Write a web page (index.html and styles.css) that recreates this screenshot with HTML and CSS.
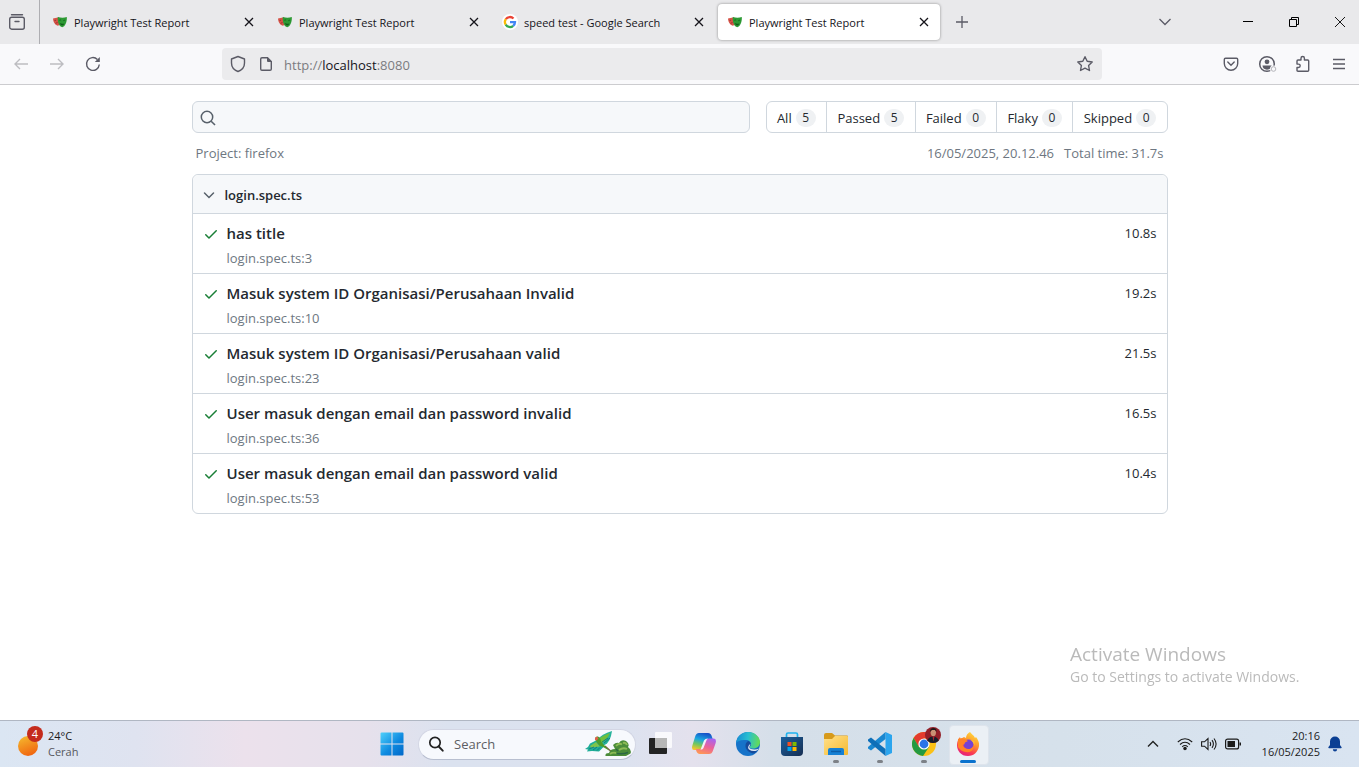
FILE: index.html
```html
<!DOCTYPE html>
<html lang="id">
<head>
<meta charset="utf-8">
<title>Playwright Test Report</title>
<link rel="stylesheet" href="styles.css">
</head>
<body>
<svg class="defs" aria-hidden="true">
  <symbol id="masks" viewBox="0 0 14 12">
    <path d="M0 2.600 6 1.200 7 8.500 5 9.800C2.600 9.600.2 6.800 0 2.600z" fill="#d65348"/>
    <path d="M1.500 4.600l1.600-.4M2.600 7.400 4.600 6.400" stroke="#8e2f28" stroke-width=".8"/>
    <path d="M4.800 1C8 1.900 11 1.900 13.800 1 14.200 5.500 12.300 10.500 9.200 11.200 6.200 10.800 4.300 6 4.800 1z" fill="#2d9a34"/>
    <path d="M6.300 4.300q1-1 1.800.2M10.300 4.700q1-1 1.900 0" fill="none" stroke="#125c1a" stroke-width=".8"/>
    <path d="M6.600 7.100q2.300 1.200 4.800.4-.8 2-2.500 1.900-1.700-.3-2.300-2.300z" fill="#125c1a"/>
  </symbol>
  <symbol id="close" viewBox="0 0 10 10"><path d="M1 1l8 8M9 1 1 9" stroke="#15141a" stroke-width="1.300" fill="none"/></symbol>
  <symbol id="check" viewBox="0 0 16 16"><path d="M13.780 4.220a.75.75 0 0 1 0 1.060l-7.250 7.250a.75.75 0 0 1-1.060 0L2.220 9.280a.75.75 0 0 1 1.060-1.060L6 10.940l6.720-6.720a.75.75 0 0 1 1.060 0z" fill="#1a7f37"/></symbol>
</svg>

<header class="browser">
  <div class="tabstrip">
    <button class="view-button" aria-label="Recent browsing"><svg width="18" height="18" viewBox="0 0 18 18" fill="none" stroke="#5b5b66" stroke-width="1.400"><path d="M3.500 1.700h11" stroke-linecap="round"/><rect x="1.700" y="4.200" width="14.600" height="12" rx="2"/><path d="M7 8.500h4" stroke-linecap="round"/></svg></button>
    <div class="tabs">
      <div class="tab"><svg class="favicon"><use href="#masks"/></svg><span class="tab-title">Playwright Test Report</span><button class="tab-close" aria-label="Close tab"><svg width="10" height="10"><use href="#close"/></svg></button></div>
      <div class="tab"><svg class="favicon"><use href="#masks"/></svg><span class="tab-title">Playwright Test Report</span><button class="tab-close" aria-label="Close tab"><svg width="10" height="10"><use href="#close"/></svg></button></div>
      <div class="tab"><svg class="favicon" viewBox="1 1 14 14"><circle cx="8" cy="8" r="8" fill="#fff"/><g fill="none" stroke-width="2.300"><path d="M3.800 5.200A5 5 0 0 1 11.500 4.500" stroke="#ea4335"/><path d="M3.800 5.200A5 5 0 0 0 3.700 10.700" stroke="#fbbc05"/><path d="M3.700 10.700A5 5 0 0 0 11.200 11.800" stroke="#34a853"/><path d="M8 8.100h5A5 5 0 0 1 11.200 11.800" stroke="#4285f4"/></g></svg><span class="tab-title">speed test - Google Search</span><button class="tab-close" aria-label="Close tab"><svg width="10" height="10"><use href="#close"/></svg></button></div>
      <div class="tab tab-active"><svg class="favicon"><use href="#masks"/></svg><span class="tab-title">Playwright Test Report</span><button class="tab-close" aria-label="Close tab"><svg width="10" height="10"><use href="#close"/></svg></button></div>
    </div>
    <button class="new-tab" aria-label="New tab"><svg width="12" height="12" viewBox="0 0 12 12"><path d="M6 0v12M0 6h12" stroke="#5b5b66" stroke-width="1.300"/></svg></button>
    <button class="all-tabs" aria-label="List all tabs"><svg width="14" height="8" viewBox="0 0 14 8"><path d="M1.500 1 7 6.500 12.500 1" fill="none" stroke="#5b5b66" stroke-width="1.300"/></svg></button>
    <div class="window-controls">
      <button aria-label="Minimize"><svg width="10" height="10" viewBox="0 0 10 10"><path d="M0 4.500h10" stroke="#000"/></svg></button>
      <button aria-label="Restore"><svg width="10" height="10" viewBox="0 0 10 10" fill="none" stroke="#000"><path d="M.5 2.500h7v7h-7zM2.500 2.500v-2h7v7h-2"/></svg></button>
      <button aria-label="Close"><svg width="10" height="10" viewBox="0 0 10 10"><path d="M0 0l10 10M10 0 0 10" stroke="#000" stroke-width=".9"/></svg></button>
    </div>
  </div>
  <div class="toolbar">
    <button aria-label="Back" disabled><svg width="16" height="16" viewBox="0 0 16 16"><path d="M15 8H2M7 3 2 8l5 5" fill="none" stroke="#bdbdc1" stroke-width="1.400"/></svg></button>
    <button aria-label="Forward" disabled><svg width="16" height="16" viewBox="0 0 16 16"><path d="M1 8h13M9 3l5 5-5 5" fill="none" stroke="#bdbdc1" stroke-width="1.400"/></svg></button>
    <button aria-label="Reload"><svg width="16" height="16" viewBox="0 0 16 16"><path d="M14.300 8.500A6.400 6.400 0 1 1 12.400 3.400" fill="none" stroke="#5b5b66" stroke-width="1.400"/><path d="M14.800 1v5h-5z" fill="#5b5b66"/></svg></button>
    <div class="spring"></div>
    <div class="urlbar">
      <svg width="16" height="18" viewBox="0 0 16 18" fill="none" stroke="#5b5b66" stroke-width="1.400"><path d="M8 1.500 14.500 4v4c0 4-2.500 7-6.500 8.500C4 15 1.500 12 1.500 8V4z" stroke-linejoin="round"/></svg>
      <svg class="page-icon" width="14" height="16" viewBox="0 0 14 16"><path d="M3 1.700h5.500L12.300 5.500V13q0 1.300-1.300 1.300H3Q1.700 14.300 1.700 13V3Q1.700 1.700 3 1.700z" fill="none" stroke="#5b5b66" stroke-width="1.400"/><path d="M8 1l5 5H9Q8 6 8 5z" fill="#5b5b66"/></svg>
      <span class="url">http://<b>localhost</b>:8080</span>
      <button class="bookmark" aria-label="Bookmark this page"><svg width="18" height="18" viewBox="0 0 18 18"><path d="M9 1.700l2.200 4.600 5 .7-3.600 3.500.9 5L9 13.100l-4.500 2.400.9-5L1.800 7l5-.7z" fill="none" stroke="#5b5b66" stroke-width="1.400" stroke-linejoin="round"/></svg></button>
    </div>
    <div class="spring"></div>
    <button aria-label="Save to Pocket"><svg width="16" height="16" viewBox="0 0 16 16" fill="none" stroke="#5b5b66" stroke-width="1.400"><path d="M2.500 2.200h11q1.200 0 1.200 1.200V7.500a6.700 6.700 0 0 1-13.400 0V3.400q0-1.200 1.200-1.200z"/><path d="M4.800 6 8 9.200 11.200 6" stroke-linecap="round"/></svg></button>
    <button aria-label="Account"><svg width="20" height="18" viewBox="0 0 20 18"><circle cx="10" cy="9" r="7.300" fill="none" stroke="#5b5b66" stroke-width="1.500"/><circle cx="10" cy="6.800" r="2.400" fill="#5b5b66"/><path d="M5.500 10.500h9q0 4-4.500 4.200-4.300-.2-4.500-4.200z" fill="#5b5b66"/><circle cx="16.500" cy="14" r="3.600" fill="#f9f9fb"/><circle cx="16.500" cy="14" r="2.300" fill="none" stroke="#b5b5ba"/></svg></button>
    <button aria-label="Extensions"><svg width="16" height="18" viewBox="0 0 16 18"><path d="M6 5V3.200a1.700 1.700 0 0 1 3.400 0V5h3.300q1 0 1 1v9.300q0 1-1 1H3q-1 0-1-1v-2.800h1.500a1.700 1.700 0 0 0 0-3.400H2V6q0-1 1-1z" fill="none" stroke="#5b5b66" stroke-width="1.400" stroke-linejoin="round"/></svg></button>
    <button aria-label="Open menu"><svg width="12" height="12" viewBox="0 0 12 12"><path d="M0 1.500h12M0 6h12M0 10.500h12" stroke="#5b5b66" stroke-width="1.300"/></svg></button>
  </div>
</header>

<main class="report">
  <div class="filters">
    <form class="search">
      <svg width="16" height="16" viewBox="0 0 16 16"><circle cx="7" cy="7" r="5.700" fill="none" stroke="#57606a" stroke-width="1.500"/><path d="M11.200 11.200 15 15" stroke="#57606a" stroke-width="1.600"/></svg>
      <input type="search" aria-label="Search tests">
    </form>
    <nav class="subnav">
      <a href="#all">All<span class="counter">5</span></a>
      <a href="#passed">Passed<span class="counter">5</span></a>
      <a href="#failed">Failed<span class="counter">0</span></a>
      <a href="#flaky">Flaky<span class="counter">0</span></a>
      <a href="#skipped">Skipped<span class="counter">0</span></a>
    </nav>
  </div>
  <div class="meta"><span class="project">Project: firefox</span><span>16/05/2025, 20.12.46</span><span>Total time: 31.7s</span></div>
  <section class="chip">
    <button class="chip-header"><svg width="16" height="16" viewBox="0 0 16 16"><path d="M3.500 6 8 10.500 12.500 6" fill="none" stroke="#57606a" stroke-width="1.500" stroke-linecap="round"/></svg>login.spec.ts</button>
    <div class="test"><svg class="status"><use href="#check"/></svg><div><a class="test-title" href="#t1">has title</a><a class="test-path" href="#p1">login.spec.ts:3</a></div><span class="duration">10.8s</span></div>
    <div class="test"><svg class="status"><use href="#check"/></svg><div><a class="test-title" href="#t2">Masuk system ID Organisasi/Perusahaan Invalid</a><a class="test-path" href="#p2">login.spec.ts:10</a></div><span class="duration">19.2s</span></div>
    <div class="test"><svg class="status"><use href="#check"/></svg><div><a class="test-title" href="#t3">Masuk system ID Organisasi/Perusahaan valid</a><a class="test-path" href="#p3">login.spec.ts:23</a></div><span class="duration">21.5s</span></div>
    <div class="test"><svg class="status"><use href="#check"/></svg><div><a class="test-title" href="#t4">User masuk dengan email dan password invalid</a><a class="test-path" href="#p4">login.spec.ts:36</a></div><span class="duration">16.5s</span></div>
    <div class="test"><svg class="status"><use href="#check"/></svg><div><a class="test-title" href="#t5">User masuk dengan email dan password valid</a><a class="test-path" href="#p5">login.spec.ts:53</a></div><span class="duration">10.4s</span></div>
  </section>
</main>

<aside class="watermark"><p class="watermark-title">Activate Windows</p><p>Go to Settings to activate Windows.</p></aside>

<footer class="taskbar">
  <button class="weather">
    <svg width="28" height="30" viewBox="0 0 28 30"><defs><linearGradient id="sun" x1=".2" y1="0" x2=".6" y2="1"><stop offset="0" stop-color="#f5b82e"/><stop offset="1" stop-color="#f0640f"/></linearGradient></defs><circle cx="11" cy="17" r="10" fill="url(#sun)"/></svg>
    <span class="badge">4</span>
    <span class="weather-text"><span>24°C</span><span class="weather-sky">Cerah</span></span>
  </button>
  <div class="apps">
    <button class="app" aria-label="Start"><svg width="24" height="24" viewBox="0 0 24 24"><defs><linearGradient id="win" x1="0" y1="0" x2="1" y2="1"><stop offset="0" stop-color="#4fd0fb"/><stop offset=".55" stop-color="#0f8be0"/><stop offset="1" stop-color="#0067c8"/></linearGradient></defs><path d="M.5 1.500q0-1 1-1h10v11H.5zM12.500.5h10q1 0 1 1v10h-11zM.5 12.500h11v11h-10q-1 0-1-1zM12.500 12.500h11v10q0 1-1 1h-10z" fill="url(#win)"/></svg></button>
    <div class="task-search">
      <svg width="16" height="16" viewBox="0 0 16 16"><circle cx="7" cy="6.500" r="5.200" fill="none" stroke="#222" stroke-width="1.700"/><path d="M10.700 10.500l4 4.200" stroke="#222" stroke-width="1.900" stroke-linecap="round"/></svg>
      <input type="text" placeholder="Search" aria-label="Search">
      <svg class="parrot" width="46" height="26" viewBox="0 0 46 26">
        <path d="M20 15l9 8" stroke="#7b543a" stroke-width="1.200"/>
        <path d="M12 9L5 12.500 3 16 0 18l3 .5L2 20.500l5-.5 7 .500 5-5z" fill="#1fae98"/>
        <path d="M11 11L5 15l1 1.500 9-1z" fill="#7fc44a"/>
        <path d="M4 18l5-2M8 19l4-3M12 19.500l3-3" stroke="#126f7c" stroke-width=".8"/>
        <path d="M12 9C15 5 20 2 27 0L26 5 24.500 9 22 12.500 18 15z" fill="#27b39b"/>
        <path d="M13 9C17 5 21 3 25 2L23 6 17 12z" fill="#6fbf3c"/>
        <path d="M19 12l6-5M17 11l6-4" stroke="#147c74" stroke-width=".9"/>
        <path d="M10 8q0-3 3-2.500 2.500 1 3 5l3.500 4L25 20l-7-4q-5-1-8-8z" fill="#4c9d2b"/>
        <path d="M10 9q-.5-3 2-3.500l1.500 2-2 2z" fill="#e0604c"/>
        <path d="M20.500 25Q20 22 24 22 25 18 30 18L28 14Q31 11 34 12 36 8 41 10 45 13 43 16 47 19 45.500 22.500L41 25z" fill="#4b8c3a"/>
        <path d="M31 15q3-3.500 6-1.500M38 12q3-1 4 2M34 19q4-3 8-1M25 23q3-2 6-1" stroke="#8dba55" stroke-width="1.900" fill="none"/>
        <path d="M32 22.500q6 1 11-1M31 18l2 2" stroke="#2b6844" stroke-width="1.500" fill="none"/>
      </svg>
    </div>
    <button class="app" aria-label="Task view"><svg width="24" height="24" viewBox="0 0 24 24"><rect y="6" x="1" width="18" height="16" rx="1" fill="#242424"/><rect x="7" width="17" height="16" rx="1" fill="#fff" opacity=".8"/><path d="M7 6h12v10H7z" fill="#b7b7b7"/></svg></button>
    <button class="app" aria-label="Copilot"><svg width="24" height="24" viewBox="0 0 24 24"><defs><linearGradient id="cpa" x1=".6" y1="0" x2=".3" y2="1"><stop offset="0" stop-color="#1750c8"/><stop offset=".4" stop-color="#1ba7e0"/><stop offset=".7" stop-color="#72c75f"/><stop offset="1" stop-color="#f4c52c"/></linearGradient><linearGradient id="cpb" x1=".7" y1="0" x2=".3" y2="1"><stop offset="0" stop-color="#a963ef"/><stop offset=".5" stop-color="#eb6199"/><stop offset="1" stop-color="#ff9854"/></linearGradient></defs><path d="M7 1h9q3 0 4 4l.7 2h-4q-3 0-4 3l-2 6q-1 2-4 2H2Q-1 18 .5 13L3 5Q4 1 7 1z" fill="url(#cpa)"/><path d="M17 22H8q-3 0-4-4l-.5-1H7q3 0 4-3l2-5.500q1-2 4-2h4.500q3.500 0 2 5l-2.500 7Q20 22 17 22z" fill="url(#cpb)"/><path d="M9 16.500 12 8.500Q13 6.500 16 6.500q-1.500 1-2 3L11.500 16q-.5 1.500-3 1.800z" fill="#f4eff8"/></svg></button>
    <button class="app" aria-label="Edge"><svg width="24" height="24" viewBox="0 0 24 24"><defs><linearGradient id="eda" x1="0" y1=".3" x2="1" y2=".4"><stop offset="0" stop-color="#168bd4"/><stop offset=".5" stop-color="#29bfd0"/><stop offset="1" stop-color="#66dc53"/></linearGradient></defs><circle cx="12" cy="12" r="12" fill="#1673c9"/><path d="M0 11C1 4 6 0 12 0c7 0 12 5 12 10 0 4-3 6.500-7 6.500-3 0-4-1.300-2.500-3 1.500-3-1-5.500-4.500-5.500C5 7.500 1 9 0 11z" fill="url(#eda)"/><path d="M14.500 13.500C13 15.500 14 17.500 17 17.500c2.500 0 4.500-.5 6-2-1 3-3 5-5 6-5-.5-9-4-8.500-8.500.3-2 1.500-3.500 3-4 2 1 2.500 3 2 4.500z" fill="#154b9c"/><path d="M14.500 12.500q-2.500 3 .5 4.500 4 1.200 8-.500-1.500 2-3.500 2.500-4 .5-6.500-1.500-2-2 .5-5z" fill="#dfe7f1"/></svg></button>
    <button class="app" aria-label="Store"><svg width="24" height="24" viewBox="0 0 24 24"><defs><linearGradient id="st" x1="0" y1="0" x2="1" y2="1"><stop offset="0" stop-color="#1b609e"/><stop offset="1" stop-color="#172e51"/></linearGradient></defs><path d="M6.500 5V2.500Q6.500 1 8 1h8q1.500 0 1.500 1.500V5" fill="none" stroke="#1fb2ee" stroke-width="1.700"/><path d="M1 5h22v15q0 4-4 4H5q-4 0-4-4z" fill="url(#st)"/><path d="M7.500 10h4v4h-4z" fill="#f25022"/><path d="M12.500 10h4v4h-4z" fill="#7fba00"/><path d="M7.500 15h4v4h-4z" fill="#00a4ef"/><path d="M12.500 15h4v4h-4z" fill="#ffb900"/></svg></button>
    <button class="app running" aria-label="File Explorer"><svg width="24" height="24" viewBox="0 0 24 24"><defs><linearGradient id="fo" x1="0" y1="0" x2="1" y2="1"><stop offset="0" stop-color="#ffe08a"/><stop offset="1" stop-color="#f6b92f"/></linearGradient></defs><path d="M0 3q0-2 2-2h6l3 2.500H23q1 0 1 1V8H0z" fill="#d79a1b"/><path d="M0 7h8l3-3h12q1 0 1 1v17q0 1-1 1H1q-1 0-1-1z" fill="url(#fo)"/><path d="M4 23v-5q0-2 2-2h12q2 0 2 2v5z" fill="#1580d4"/><path d="M7 19.500h10" stroke="#0b5da8" stroke-width="1.500"/></svg></button>
    <button class="app running" aria-label="Visual Studio Code"><svg width="24" height="24" viewBox="0 0 24 24"><path d="M17.500 0 24 3v18l-6.500 3z" fill="#2ba5ee"/><path d="M17.500 0v7L3 18.500 0 16.500v-1.500z" fill="#1a87d0"/><path d="M17.500 24v-7L3 5.500 0 7.500V9z" fill="#0e6fb8"/></svg></button>
    <button class="app running" aria-label="Chrome"><svg class="chrome" width="24" height="24" viewBox="0 0 24 24"><circle cx="12" cy="12" r="12" fill="#fbc116"/><path d="M1.600 6A12 12 0 0 1 22.400 6L12 6.500 6.500 14.500z" fill="#e33b2e"/><path d="M1.600 6A12 12 0 0 0 11 24l6-9-10 0z" fill="#249a41"/><circle cx="12" cy="12" r="5.600" fill="#fff"/><circle cx="12" cy="12" r="4.400" fill="#2a74e8"/></svg><svg class="avatar" width="16" height="16" viewBox="0 0 16 16"><clipPath id="av"><circle cx="8" cy="8" r="8"/></clipPath><g clip-path="url(#av)"><path d="M0 0h16v16H0z" fill="#921f28"/><path d="M2 16q0-6 6-6.500 6 .5 6 6.500z" fill="#17202b"/><ellipse cx="8.300" cy="5.500" rx="2.700" ry="3.700" fill="#c99275"/><path d="M5 5Q5 1 8.500 1 12 1 11.300 5L10 3H7z" fill="#221719"/><path d="M7.500 9.500l1 5 1-5z" fill="#b02230"/></g></svg></button>
    <button class="app running current" aria-label="Firefox"><svg width="24" height="24" viewBox="0 0 24 24"><defs><linearGradient id="ff" x1=".8" y1="0" x2=".3" y2="1"><stop offset="0" stop-color="#ffe13f"/><stop offset=".4" stop-color="#ff9a2a"/><stop offset=".75" stop-color="#fb3b52"/><stop offset="1" stop-color="#e3207f"/></linearGradient></defs><path d="M14 0c1 2 4 3 5 6l1-1c2 3 3.500 5 3 9-1 6-5 10-11 10C5 24 1 19 1 13c0-3 1-6 3-8l.5 2L8 5l2 1c0-3 2-5 4-6z" fill="url(#ff)"/><circle cx="12.500" cy="12.500" r="5" fill="#7541d2"/><path d="M2 7q5-2 10 2l-3 1.500q0 2-2.500 2.500 2 4.500 7 4 4-1 4-5 1.500 6-4 8-8 1-11.500-5z" fill="#ff8326"/><path d="M13 8q4 0 5.500 6V9z" fill="#ffbe35"/></svg></button>
  </div>
  <div class="tray">
    <button aria-label="Show hidden icons"><svg width="12" height="8" viewBox="0 0 12 8"><path d="M1 6.500 6 1.500l5 5" fill="none" stroke="#222" stroke-width="1.400"/></svg></button>
    <button class="tray-status" aria-label="Network, volume, battery">
      <svg width="16" height="14" viewBox="0 0 16 14" fill="none" stroke="#1b1b1b" stroke-width="1.100"><path d="M.8 5Q8-1.500 15.200 5M3 7.500q5-4.500 10 0M5.200 9.800q2.800-2.500 5.600 0"/><circle cx="8" cy="11.500" r="1.200" fill="#1b1b1b"/></svg>
      <svg width="16" height="14" viewBox="0 0 16 14" fill="none" stroke="#1b1b1b" stroke-width="1.100"><path d="M.6 4.800H3.500L7 1.600v10.800L3.500 9.200H.6zM9 5q1.300 2 0 4M11 3.200q2.800 3.800 0 7.600M13 1.500q4.200 5.500 0 11"/></svg>
      <svg width="16" height="12" viewBox="0 0 16 12"><rect x=".6" y="1.100" width="13" height="9.800" rx="2" fill="none" stroke="#1b1b1b" stroke-width="1.200"/><path d="M2.500 3h7.500v6H2.500zM14.500 4.500H16v3h-1.500z" fill="#1b1b1b"/></svg>
    </button>
    <button class="clock"><span>20:16</span><span>16/05/2025</span></button>
    <button aria-label="Notifications"><svg width="14" height="16" viewBox="0 0 14 16"><path d="M7 .5a5 5 0 0 1 5 5V9l1.700 2.300q0 1-.8 1H1.100q-.8 0-.8-1L2 9V5.500a5 5 0 0 1 5-5zM4.800 13.300h4.400Q9 15.500 7 15.500t-2.200-2.200z" fill="#0b3f93"/></svg></button>
  </div>
</footer>
</body>
</html>
```

FILE: styles.css
```css
* { box-sizing: border-box; }

body {
  margin: 0;
  min-height: 100vh;
  display: flex;
  flex-direction: column;
  background: #fff;
  color: #24292f;
  font: 14px/20px "Open Sans", "Noto Sans", sans-serif;
}

button, input { font: inherit; color: inherit; border: 0; background: none; padding: 0; margin: 0; outline: none; }
button { display: flex; align-items: center; justify-content: center; }
a { color: inherit; text-decoration: none; }
p { margin: 0; }
svg { flex: none; display: block; }
.defs { position: absolute; width: 0; height: 0; }

/* Browser chrome */
.browser { color: #15141a; border-bottom: 1px solid #cccccf; }
.tabstrip { display: flex; height: 44px; background: #e9e9eb; }
.view-button { width: 40px; padding-right: 5px; border-right: 1px solid #aeaeb2; }
.tabs { display: flex; gap: 3px; padding: 4px 3px; flex: 0 1 903px; }
.tab { flex: 1; display: flex; align-items: center; padding: 0 6px 0 10px; border-radius: 4px; font-size: 11px; min-width: 0; }
.tab-active { background: #fff; box-shadow: 0 0 3px rgba(0, 0, 0, .4); }
.favicon { width: 14px; height: 14px; margin-right: 7px; overflow: visible; }
.tab-title { flex: 1; padding-top: 1px; white-space: nowrap; overflow: hidden; }
.tab-close { width: 20px; height: 20px; }
.new-tab { width: 38px; }
.all-tabs { width: 36px; margin-left: auto; }
.window-controls { display: flex; gap: 8px; margin-left: 46px; }
.window-controls button { width: 38px; }
.toolbar { display: flex; align-items: center; height: 40px; padding: 0 2px 0 3px; background: #f9f9fb; }
.toolbar > button { width: 36px; height: 32px; }
.spring { flex: 9; }
.urlbar { flex: 70; display: flex; align-items: center; height: 32px; padding: 0 8px; border-radius: 4px; background: #ebebed; }
.page-icon { margin: 0 11px 0 13px; }
.url { flex: 1; padding-top: 2px; color: #7b7b80; font-size: 13px; }
.url b { font-weight: 400; color: #15141a; }

/* Test report */
.report { flex: 1; width: 100%; max-width: 1024px; margin: 0 auto; padding: 16px 24px; }
.filters { display: flex; gap: 16px; }
.search { flex: 1; display: flex; align-items: center; height: 32px; padding: 1px 7px 0; border: 1px solid #d0d7de; border-radius: 6px; background: #f6f8fa; }
.search input { flex: 1; padding-left: 8px; }
.subnav { display: flex; flex: 0 1 402px; border: 1px solid #d0d7de; border-radius: 6px; }
.subnav a { flex: 1 0 auto; display: flex; align-items: center; justify-content: center; gap: 4px; padding: 2px 10px 0; font-size: 13px; }
.subnav a + a { border-left: 1px solid #d0d7de; }
.counter { min-width: 20px; padding: 0 6px; border-radius: 20px; background: #eff1f3; font-size: 12px; line-height: 18px; text-align: center; }
.meta { display: flex; gap: 10px; padding: 10px 4px 11px; color: #6e7781; font-size: 13px; }
.project { flex: 1; }
.chip { border: 1px solid #d0d7de; border-radius: 6px; }
.chip-header { width: 100%; height: 38px; justify-content: flex-start; gap: 8px; padding: 2px 8px 0; border-radius: 6px 6px 0 0; background: #f6f8fa; font-size: 13px; font-weight: 600; }
.test { display: flex; gap: 8px; min-height: 60px; padding: 9px 10px 5px; border-top: 1px solid #d0d7de; }
.status { width: 16px; height: 16px; margin-top: 3px; }
.test-title, .test-path { display: block; }
.test-title { font-size: 15px; font-weight: 600; }
.test-path { margin-top: 5px; color: #6e7781; font-size: 13px; }
.duration { margin-left: auto; font-size: 13px; }

.watermark { position: fixed; right: 53px; bottom: 80px; min-width: 236px; color: #bababa; line-height: 20px; }
.watermark-title { font-size: 19px; line-height: 26px; }

/* Taskbar */
.taskbar {
  display: grid;
  grid-template-columns: 1fr auto 1fr;
  height: 47px;
  padding-left: 1px;
  border-top: 1px solid #b0b7c3;
  background: linear-gradient(90deg, #dbe6f3, #dfe3f0 10%, #ece1ec 18%, #e6e1ec 27%, #dbe2ef 33%, #dce2ef 46%, #e4e1ed 51%, #d5dfe9 57%, #d6e1eb 78%, #d9e4f1);
  color: #1b1b1b;
  font-size: 11px;
  line-height: 16px;
}
.weather { position: relative; justify-self: start; gap: 2px; padding-left: 16px; }
.badge { position: absolute; left: 26px; top: 5px; width: 16px; height: 16px; border-radius: 8px; background: #c42b1c; color: #fff; }
.weather-text { display: flex; flex-direction: column; padding-left: 1px; text-align: left; }
.weather-sky { color: #56575d; }
.apps { display: flex; align-items: center; }
.app { position: relative; width: 44px; height: 46px; }
.task-search { display: flex; align-items: center; width: 218px; height: 31px; margin: 0 2px 0 4px; padding: 0 4px 0 9px; border: 1px solid #d3d6e4; border-bottom-color: #b8bfd0; border-radius: 16px; background: #f7f9fd; }
.task-search input { flex: 1; min-width: 0; padding-left: 10px; font-size: 13px; }
.task-search input::placeholder { color: #5d5e63; opacity: 1; }
.avatar { position: absolute; left: 23px; top: 6px; }
.running::after { content: ""; position: absolute; left: 19px; bottom: 4px; width: 6px; height: 3px; border-radius: 2px; background: #7d8187; }
.current { z-index: 0; }
.current::before { content: ""; position: absolute; z-index: -1; left: 3px; top: 4px; width: 38px; height: 38px; border: 1px solid #dee4ec; border-radius: 4px; background: #ebf0f5; }
.current::after { left: 14px; width: 16px; background: #0a72ce; }
.tray { display: flex; align-items: center; justify-self: end; padding-right: 17px; }
.tray-status { gap: 8px; margin: 0 17px 0 18px; }
.clock { flex-direction: column; align-items: flex-end; min-width: 62px; margin-right: 8px; }
```
